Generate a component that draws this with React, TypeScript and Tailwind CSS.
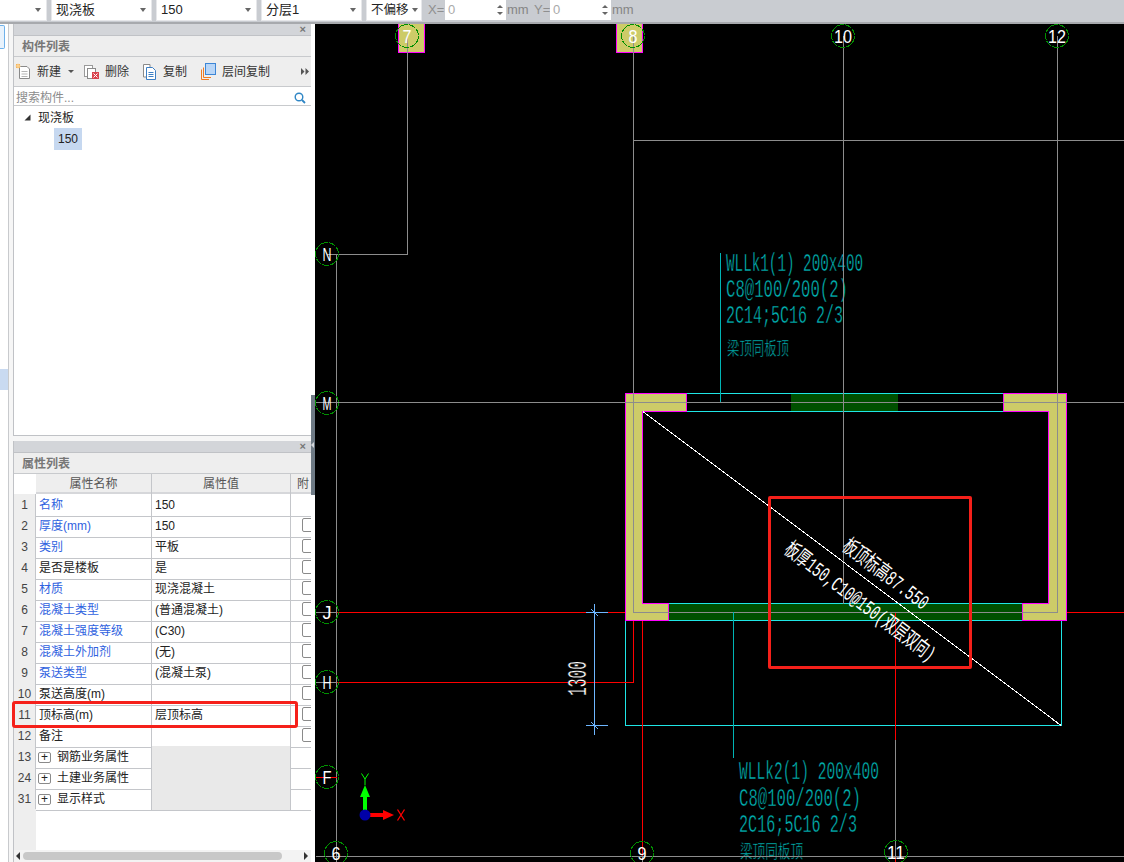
import React from "react";

const FONT = '"Liberation Sans","Noto Sans CJK SC",sans-serif';

function Select({ w, text, cls = "" }: { w: string; text: string; cls?: string }) {
  return (
    <div className={`${w} h-[20px] bg-white flex items-center justify-between pl-[4px] pr-[5px] text-[13px] text-[#222] shadow-[0_0_0_1px_#e6e7ea] ${cls}`}>
      <span className="whitespace-nowrap">{text}</span>
      <span className="w-0 h-0 border-l-[3px] border-r-[3px] border-t-[4px] border-l-transparent border-r-transparent border-t-[#666]" />
    </div>
  );
}

function Spin() {
  return (
    <div className="w-[61px] h-[20px] bg-white flex items-center justify-between pl-[3px] pr-[3px] text-[13px] text-[#aaa]">
      <span>0</span>
      <span className="flex flex-col gap-[4px]">
        <span className="block w-0 h-0 border-l-[3px] border-r-[3px] border-b-[3px] border-l-transparent border-r-transparent border-b-[#666]" />
        <span className="block w-0 h-0 border-l-[3px] border-r-[3px] border-t-[3px] border-l-transparent border-r-transparent border-t-[#666]" />
      </span>
    </div>
  );
}

function PanelHead({ title }: { title: string }) {
  return (
    <>
      <div className="h-[12px] bg-[#d3d5d9] border-b border-[#c0c2c6] flex items-center justify-end pr-[5px] text-[11px] leading-none text-[#777] font-bold">×</div>
      <div className="h-[21px] bg-[#eeeeee] border-b border-[#c8cacd] flex items-center pt-[2px] pl-[8px] text-[12px] font-bold text-[#777]">{title}</div>
    </>
  );
}

const IconNew = () => (
  <svg width="18" height="18" viewBox="0 0 18 18" className="shrink-0">
    <path d="M4.5 3.5H12L14.5 6V15.5H4.5Z" fill="#fff" stroke="#8a8a8a" />
    <path d="M6.5 8.5H12.5M6.5 11H12.5M6.5 13.5H12.5" stroke="#b5b5b5" />
    <rect x="1" y="1" width="4" height="4" fill="#f5b45a" />
    <path d="M3 0V6M0 3H6" stroke="#fbe2b5" strokeWidth="0.8" />
  </svg>
);
const IconDel = () => (
  <svg width="18" height="18" viewBox="0 0 18 18" className="shrink-0">
    <rect x="1.5" y="2.5" width="8" height="11" fill="#fff" stroke="#9a9a9a" />
    <rect x="4.5" y="5.5" width="8" height="10" fill="#fff" stroke="#8a8a8a" />
    <rect x="9" y="9" width="7" height="7" fill="#d9434e" />
    <path d="M10.5 10.5L14.5 14.5M14.5 10.5L10.5 14.5" stroke="#fff" />
  </svg>
);
const IconCopy = () => (
  <svg width="18" height="18" viewBox="0 0 18 18" className="shrink-0">
    <path d="M2.5 1.5H9V14H2.5Z" fill="#fff" stroke="#8a8a8a" />
    <path d="M5.5 4.5H11.5L14.5 7.5V16.5H5.5Z" fill="#fff" stroke="#3d7fc4" />
    <path d="M7.5 9.5H12.5M7.5 11.5H12.5M7.5 13.5H12.5" stroke="#3d7fc4" />
  </svg>
);
const IconFloor = () => (
  <svg width="18" height="18" viewBox="0 0 18 18" className="shrink-0">
    <path d="M1.5 6.5V16.5H9" fill="none" stroke="#ef7b22" />
    <path d="M3.5 4.5V14.5H11" fill="none" stroke="#ef7b22" />
    <rect x="5.5" y="0.5" width="10" height="11" fill="#b9d6f7" stroke="#3d86d6" />
  </svg>
);

function Tool({ icon, text, cls = "" }: { icon: React.ReactNode; text: string; cls?: string }) {
  return (
    <div className={`flex items-center gap-[4px] text-[12px] text-[#333] whitespace-nowrap ${cls}`}>
      {icon}
      <span>{text}</span>
    </div>
  );
}

type Row = { n: number; name: string; val?: string; blue?: boolean; check?: boolean };
const rows: Row[] = [
  { n: 1, name: "名称", val: "150", blue: true },
  { n: 2, name: "厚度(mm)", val: "150", blue: true, check: true },
  { n: 3, name: "类别", val: "平板", blue: true, check: true },
  { n: 4, name: "是否是楼板", val: "是", check: true },
  { n: 5, name: "材质", val: "现浇混凝土", blue: true, check: true },
  { n: 6, name: "混凝土类型", val: "(普通混凝土)", blue: true, check: true },
  { n: 7, name: "混凝土强度等级", val: "(C30)", blue: true, check: true },
  { n: 8, name: "混凝土外加剂", val: "(无)", blue: true, check: true },
  { n: 9, name: "泵送类型", val: "(混凝土泵)", blue: true, check: true },
  { n: 10, name: "泵送高度(m)", val: "", check: true },
  { n: 11, name: "顶标高(m)", val: "层顶标高", check: true },
  { n: 12, name: "备注", val: "", check: true },
];
const groups = [
  { n: 13, name: "钢筋业务属性" },
  { n: 24, name: "土建业务属性" },
  { n: 31, name: "显示样式" },
];

const GRID = "grid grid-cols-[22px_116px_139px_20px]";

function TableRows() {
  return (
    <>
      {rows.map((r) => (
        <div key={r.n} className={`${GRID} h-[21px] text-[12px] leading-[22px]`}>
          <div className="bg-[#eeeeee] border-b border-r border-[#c4c6ca] text-center text-[#444]">{r.n}</div>
          <div className={`border-b border-r border-[#c4c6ca] pl-[3px] whitespace-nowrap ${r.blue ? "text-[#2f62e0]" : "text-[#222]"}`}>{r.name}</div>
          <div className="border-b border-r border-[#c4c6ca] pl-[3px] whitespace-nowrap text-[#222]">{r.val}</div>
          <div className="border-b border-[#c4c6ca] overflow-hidden pl-[11px] pt-[3px]">
            {r.check && <div className="w-[14px] h-[14px] bg-white border border-[#8a8a8a] rounded-[2px]" />}
          </div>
        </div>
      ))}
      {groups.map((g) => (
        <div key={g.n} className={`${GRID} h-[21px] text-[12px] leading-[22px]`}>
          <div className="bg-[#eeeeee] border-b border-r border-[#c4c6ca] text-center text-[#444]">{g.n}</div>
          <div className="border-b border-r border-[#c4c6ca] pl-[2px] flex items-center gap-[6px] text-[#222] whitespace-nowrap">
            <span className="w-[13px] h-[11px] border border-[#8a8a8a] rounded-[2px] flex items-center justify-center text-[12px] leading-none text-[#222]">+</span>
            <span>{g.name}</span>
          </div>
          <div className="bg-[#e9e9e9] border-b border-r border-[#c4c6ca]" />
          <div className="border-b border-[#c4c6ca]" />
        </div>
      ))}
    </>
  );
}

const Wall = ({ d }: { d: string }) => <path d={d} fill="#cdcb68" stroke="#ff00ff" strokeWidth="1" />;

function Axis({ x, y, t }: { x: number; y: number; t: string }) {
  return (
    <g>
      <circle cx={x} cy={y} r="11.5" fill="none" stroke="#009000" strokeWidth="1" strokeDasharray="7 1" />
      <text x={x} y={y + 7} textAnchor="middle" fill="#fff" fontSize="19" fontFamily='"Liberation Sans",sans-serif' textLength={t.length * 9} lengthAdjust="spacingAndGlyphs">{t}</text>
    </g>
  );
}

function Cad() {
  const mono = '"Liberation Mono","Noto Sans CJK SC",monospace';
  const teal = "#00b4b4";
  const gray = "#8c8c8c";
  const cyan = "#1fe6e6";
  const red = "#ff0000";
  const blue = "#6eb6ff";
  return (
    <svg viewBox="315 24 809 838" width="809" height="838" shapeRendering="crispEdges" className="block">
      <rect x="315" y="24" width="809" height="838" fill="#000" />
      {/* beams */}
      <rect x="791" y="394" width="107" height="17" fill="#005000" />
      <path d="M687 393.5H1003M687 411.5H1003" stroke={cyan} />
      <rect x="669" y="604" width="354" height="16" fill="#005000" />
      <path d="M669 603.5H1023M669 620.5H1023" stroke={cyan} />
      {/* cyan footprint */}
      <path d="M625.5 620V725.5H1061.5V620" fill="none" stroke={cyan} />
      {/* red lines */}
      <path d="M337 612.5H625.5M1067 612.5H1124M337 682.5H633.5V620M642.5 620V862M895.5 612V862" fill="none" stroke={red} />
      {/* walls */}
      <Wall d="M625.5 393.5H686.5V411.5H642.5V603.5H668.5V620.5H625.5Z" />
      <Wall d="M1003 393.5H1066.5V620.5H1022.5V603.5H1048.5V411.5H1003Z" />
      <Wall d="M398.5 20H424.5V52.5H398.5Z" />
      <Wall d="M616.5 20H642.5V52.5H616.5Z" />
      {/* labels drawn under the axes so their thinning stroke does not nick the lines */}
      <g fill={teal} fontFamily={mono} stroke="#000" strokeWidth="0.45">
        <text x="726" y="271" fontSize="26" textLength="137" lengthAdjust="spacingAndGlyphs">WLLk1(1) 200x400</text>
        <text x="726" y="297" fontSize="26" textLength="122" lengthAdjust="spacingAndGlyphs">C8@100/200(2)</text>
        <text x="726" y="323" fontSize="26" textLength="117" lengthAdjust="spacingAndGlyphs">2C14;5C16 2/3</text>
        <text x="727" y="355" fontSize="18" textLength="62" lengthAdjust="spacingAndGlyphs">梁顶同板顶</text>
        <text x="739" y="779" fontSize="26" textLength="140" lengthAdjust="spacingAndGlyphs">WLLk2(1) 200x400</text>
        <text x="739" y="806" fontSize="26" textLength="122" lengthAdjust="spacingAndGlyphs">C8@100/200(2)</text>
        <text x="739" y="832" fontSize="26" textLength="118" lengthAdjust="spacingAndGlyphs">2C16;5C16 2/3</text>
        <text x="740" y="858" fontSize="18" textLength="63" lengthAdjust="spacingAndGlyphs">梁顶同板顶</text>
      </g>
      {/* gray axes */}
      <path
        d="M407.5 36V254.5H327M633.5 36V403M633.5 140.5H1124M843.5 36V604M1057.5 36V612.5H633.5V403M316 402.5H1124M336.5 254V862M316 856.5H1124M316 612.5H337M316 682.5H337M895.5 740V856M642.5 856V862"
        fill="none"
        stroke={gray}
      />
      <path d="M316 777.5H337" stroke={red} />
      {/* teal leaders */}
      <path d="M720.5 253V402M733.5 612V758" stroke={teal} fill="none" />
      {/* diagonal */}
      <path d="M643 411.5L1061 725.5" stroke="#fff" fill="none" />
      {/* dimension */}
      <path d="M594.5 604V735M586 612.5H608M586 725.5H608M591 609L598 616M591 722L598 729" stroke={blue} fill="none" />
      <text transform="translate(586 696) rotate(-90)" fill="#fff" stroke="#000" strokeWidth="0.45" fontSize="27" fontFamily={mono} textLength="35" lengthAdjust="spacingAndGlyphs">1300</text>
      <g fill="#fff" fontFamily={mono}>
        <text transform="translate(841 549) rotate(37)" fontSize="21" textLength="102" lengthAdjust="spacingAndGlyphs">板顶标高87.550</text>
        <text transform="translate(783 552) rotate(37)" fontSize="21" textLength="183" lengthAdjust="spacingAndGlyphs">板厚150,C10@150(双层双向)</text>
      </g>
      {/* axis bubbles */}
      <Axis x={407} y={36} t="7" />
      <Axis x={633} y={36} t="8" />
      <Axis x={843} y={36} t="10" />
      <Axis x={1057} y={36} t="12" />
      <Axis x={327} y={254} t="N" />
      <Axis x={327} y={403} t="M" />
      <Axis x={327} y={612} t="J" />
      <Axis x={327} y={682} t="H" />
      <Axis x={327} y={777} t="F" />
      <Axis x={336} y={853} t="6" />
      <Axis x={642} y={853} t="9" />
      <Axis x={896} y={852} t="11" />
      {/* gizmo */}
      <g shapeRendering="geometricPrecision">
        <rect x="363" y="790" width="4" height="25" fill="#00ff00" />
        <path d="M365 785L370 797H360Z" fill="#00ff00" />
        <rect x="365" y="813" width="20" height="4" fill="#ff0000" />
        <path d="M394 815L383 810V820Z" fill="#ff0000" />
        <circle cx="365" cy="815" r="5.5" fill="#0000a8" />
        <path d="M361.5 773.5L365 779L368.5 773.5M365 779V785" stroke="#00ff00" fill="none" />
        <path d="M397.5 809.5L404.5 820.5M404.5 809.5L397.5 820.5" stroke="#ff0000" strokeWidth="1.3" fill="none" />
      </g>
    </svg>
  );
}

export default function App() {
  return (
    <div className="w-[1124px] h-[862px] overflow-hidden relative flex flex-col bg-[#f6f6f6]" style={{ fontFamily: FONT }}>
      {/* top bar */}
      <div className="h-[24px] shrink-0 bg-[#c9ccd1] border-b-2 border-[#a7a9ad] flex items-start">
        <Select w="w-[46px]" text="" />
        <Select w="w-[99px] ml-[6px]" text="现浇板" />
        <Select w="w-[99px] ml-[6px]" text="150" />
        <Select w="w-[99px] ml-[6px]" text="分层1" />
        <Select w="w-[54px] ml-[6px] !pr-[3px]" text="不偏移" cls="!text-[12.5px]" />
        <span className="ml-[7px] w-[17px] text-[13px] leading-[20px] text-[#8f8f8f]">X=</span>
        <Spin />
        <span className="ml-[1px] w-[27px] text-[13px] leading-[20px] text-[#858585]">mm</span>
        <span className="w-[16px] text-[13px] leading-[20px] text-[#8f8f8f]">Y=</span>
        <Spin />
        <span className="ml-[1px] text-[13px] leading-[20px] text-[#858585]">mm</span>
      </div>

      <div className="flex flex-1 min-h-0">
        {/* far-left strip */}
        <div className="w-[9px] shrink-0 bg-white border-r border-[#c8cacd] flex flex-col">
          <div className="w-[5px] h-[24px] mt-[1px] bg-[#e8f2fc] border border-l-0 border-[#6fb1ea] rounded-r-[2px]" />
          <div className="w-[8px] h-[21px] mt-[320px] bg-[#c9daf1]" />
        </div>
        {/* gutter */}
        <div className="w-[4px] shrink-0 bg-[#f6f6f6]" />
        {/* panels */}
        <div className="w-[298px] shrink-0 flex flex-col">
          <div className="h-[412px] shrink-0 bg-white border-l border-b border-[#c0c2c6] flex flex-col">
            <PanelHead title="构件列表" />
            <div className="h-[30px] bg-[#eeeeee] border-b border-[#c8cacd] flex items-center pl-[1px] relative">
              <Tool icon={<IconNew />} text="新建" />
              <span className="ml-[7px] w-0 h-0 border-l-[3px] border-r-[3px] border-t-[3px] border-l-transparent border-r-transparent border-t-[#555]" />
              <Tool icon={<IconDel />} text="删除" cls="ml-[9px]" />
              <Tool icon={<IconCopy />} text="复制" cls="ml-[12px]" />
              <Tool icon={<IconFloor />} text="层间复制" cls="ml-[13px]" />
              <svg width="8" height="7" viewBox="0 0 8 7" className="ml-auto mr-[2px]">
                <path d="M0 0L3.5 3.5L0 7ZM4.5 0L8 3.5L4.5 7Z" fill="#555" />
              </svg>
            </div>
            <div className="h-[19px] border-b border-[#c8cacd] flex items-center justify-between pt-[3px] pl-[2px] pr-[5px] text-[12px] text-[#8c8c8c]">
              <span>搜索构件...</span>
              <svg width="12" height="12" viewBox="0 0 12 12">
                <circle cx="5" cy="5" r="3.8" fill="none" stroke="#2f86c5" strokeWidth="1.4" />
                <path d="M8 8L11 11" stroke="#2f86c5" strokeWidth="1.8" />
              </svg>
            </div>
            <div className="pt-[1px] text-[12px] text-[#222]">
              <div className="h-[21px] flex items-center pl-[10px] gap-[7px]">
                <svg width="7" height="7" viewBox="0 0 7 7"><path d="M0.5 6.5H6.5V0.5Z" fill="#333" /></svg>
                <span>现浇板</span>
              </div>
              <div className="ml-[40px] w-[28px] h-[22px] bg-[#c6d8f0] text-center leading-[22px] text-[#222]">150</div>
            </div>
          </div>
          <div className="h-[5px] shrink-0 bg-[#f6f6f6]" />
          <div className="flex-1 min-h-0 bg-white border-l border-[#c0c2c6] flex flex-col relative overflow-hidden">
            <PanelHead title="属性列表" />
            <div className={`${GRID} h-[20px] bg-[#eeeeee] border-b-2 border-[#d6d7da] text-[12px] leading-[20px] text-[#555] text-center shrink-0`}>
              <div className="bg-white" />
              <div className="border-r border-[#c4c6ca]">属性名称</div>
              <div className="border-r border-[#c4c6ca]">属性值</div>
              <div className="whitespace-nowrap overflow-hidden text-left pl-[6px]">附</div>
            </div>
            <TableRows />
            <div className={`${GRID} flex-1`}>
              <div className="bg-[#eeeeee]" />
            </div>
            {/* scrollbar */}
            <div className="h-[12px] shrink-0 flex items-center bg-[#f3f3f3] px-[2px] gap-[2px]">
              <span className="w-0 h-0 border-t-[4px] border-b-[4px] border-r-[4px] border-t-transparent border-b-transparent border-r-[#333]" />
              <span className="ml-[1px] w-[259px] h-[8px] rounded-[4px] bg-[#c8c8c8]" />
              <span className="ml-auto mr-[1px] w-0 h-0 border-t-[4px] border-b-[4px] border-l-[4px] border-t-transparent border-b-transparent border-l-[#333]" />
            </div>
          </div>
        </div>
        {/* splitter */}
        <div className="w-[4px] shrink-0 bg-white relative">
          <div className="absolute left-0 top-[371px] w-[4px] h-[100px] bg-[#6e7a85] flex items-center">
            <span className="w-0 h-0 border-t-[3px] border-b-[3px] border-r-[3px] border-t-transparent border-b-transparent border-r-[#d5d8dc]" />
          </div>
        </div>
        {/* canvas */}
        <div className="flex-1 min-w-0 relative">
          <Cad />
        </div>
      </div>

      {/* red annotation boxes */}
      <div className="absolute left-[12px] top-[701px] w-[286px] h-[27px] border-[3px] border-[#f5201a] rounded-[3px]" />
      <div className="absolute left-[768px] top-[496px] w-[204px] h-[173px] border-[3px] border-[#f5201a] rounded-[2px]" />
    </div>
  );
}
